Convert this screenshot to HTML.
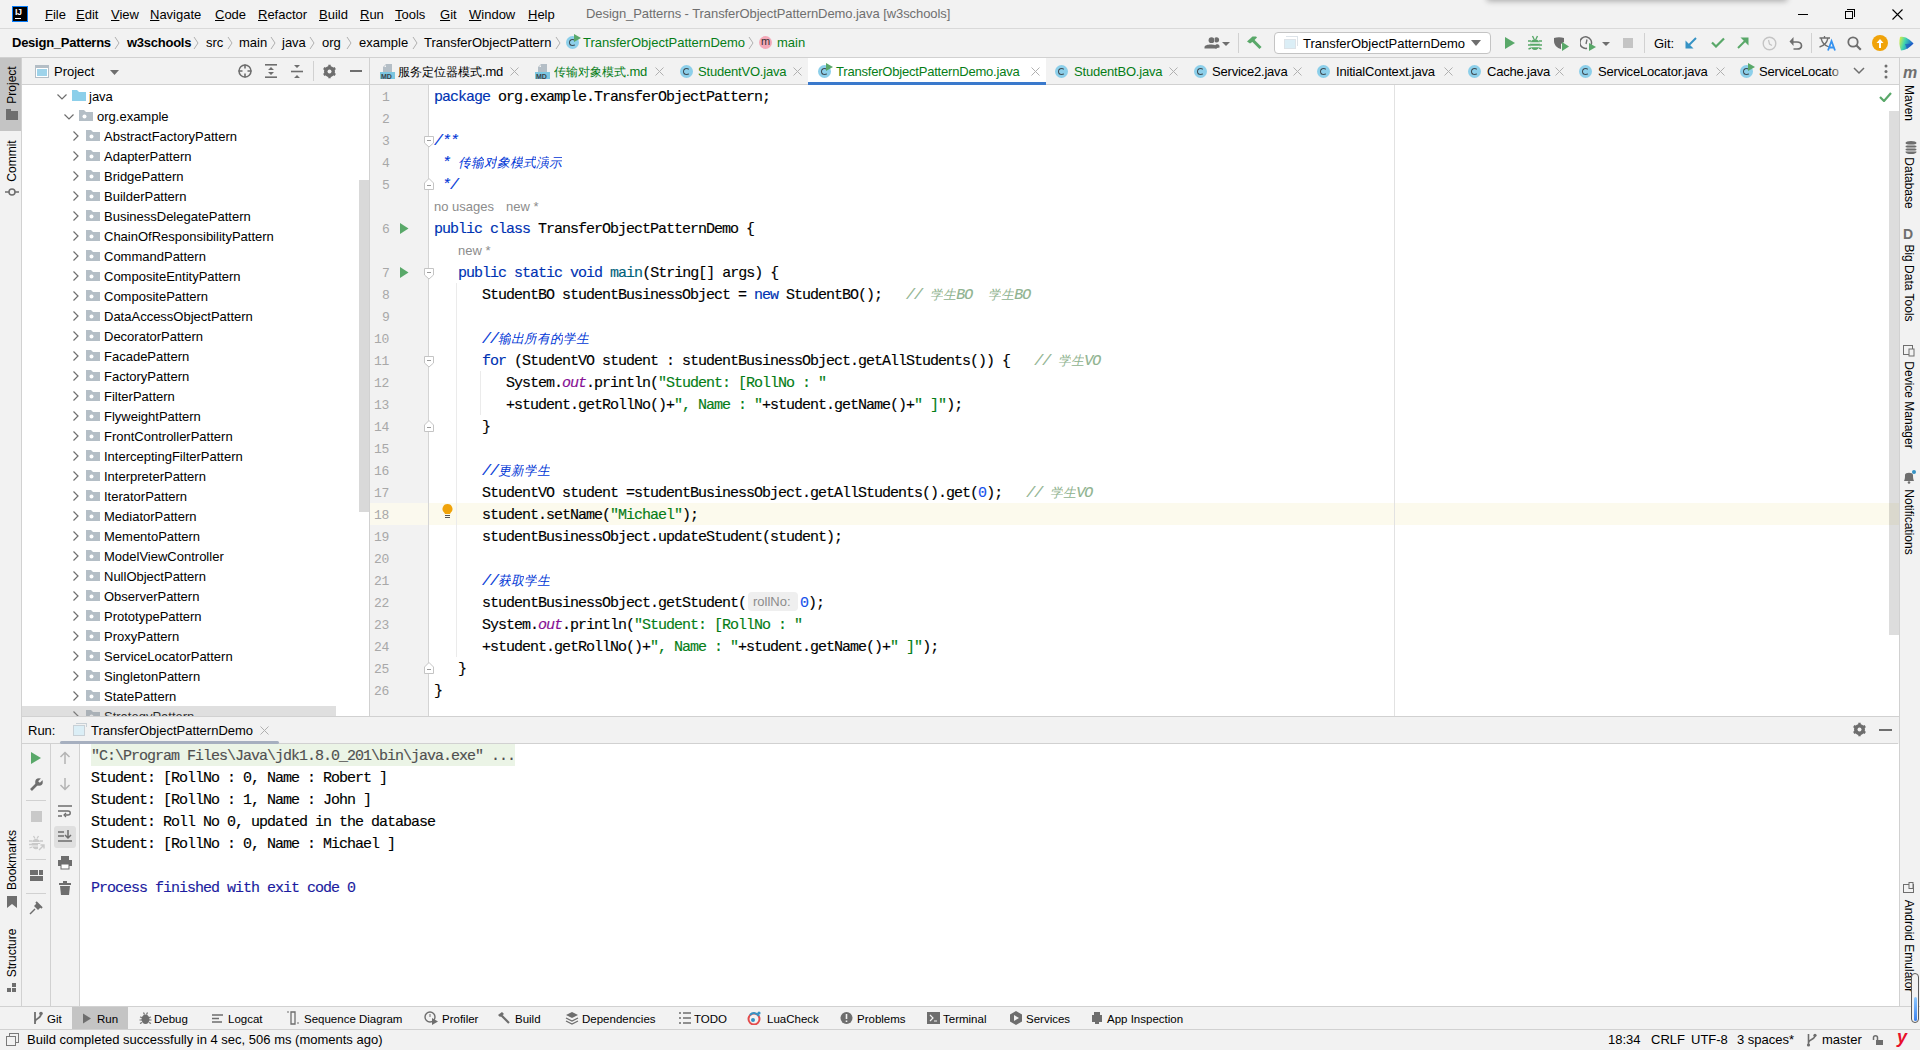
<!DOCTYPE html><html><head><meta charset="utf-8"><style>
*{margin:0;padding:0;box-sizing:border-box}
html,body{width:1920px;height:1050px;overflow:hidden;background:#f2f2f2;font-family:"Liberation Sans",sans-serif;font-size:13px;color:#000}
.a{position:absolute;white-space:pre}
.ui{font-family:"Liberation Sans",sans-serif;font-size:13px;line-height:16px}
.mono{font-family:"Liberation Mono",monospace;font-size:15px;letter-spacing:-1px;line-height:16px;-webkit-text-stroke:0.15px currentColor}
.hl{position:absolute;background:#d1d1d1}
.vl{position:absolute;background:#d1d1d1}
.kw{color:#0033b3}
.str{color:#067d17}
.num{color:#1750eb}
.fn{color:#00627a}
.st{color:#871094;font-style:italic}
.doc{color:#0037d6;font-style:italic}
.tr{color:#8fb38f;font-style:italic}
.inl{color:#8c8c8c}
.cjk{display:inline-block;text-align:center;overflow:hidden;vertical-align:top}
.ui .cjk{font-size:12px;width:12px}
.mono .cjk{font-size:13px;letter-spacing:0;width:13px;-webkit-text-stroke:0}
</style></head><body>
<div class="a" style="left:0px;top:0px;width:1920px;height:28px;background:#f2f2f2;"></div>
<div class="a" style="left:0px;top:28px;width:1920px;height:1px;background:#d9d9d9;"></div>
<div class="a" style="left:1488px;top:-20px;width:298px;height:20px;background:#aaa;box-shadow:0 0 6px 1px rgba(0,0,0,0.32)"></div>
<div class="a" style="left:0px;top:57px;width:1920px;height:1px;background:#d1d1d1;"></div>
<div class="a" style="left:21px;top:58px;width:1px;height:948px;background:#d1d1d1;"></div>
<div class="a" style="left:1899px;top:58px;width:1px;height:948px;background:#d1d1d1;"></div>
<div class="a" style="left:22px;top:85px;width:347px;height:631px;background:#ffffff;"></div>
<div class="a" style="left:22px;top:84px;width:1877px;height:1px;background:#d1d1d1;"></div>
<div class="a" style="left:369px;top:58px;width:1px;height:658px;background:#d1d1d1;"></div>
<div class="a" style="left:370px;top:85px;width:58px;height:631px;background:#f2f2f2;"></div>
<div class="a" style="left:428px;top:85px;width:1px;height:631px;background:#d4d4d4;"></div>
<div class="a" style="left:429px;top:85px;width:1470px;height:631px;background:#ffffff;"></div>
<div class="a" style="left:22px;top:716px;width:1876px;height:1px;background:#d1d1d1;"></div>
<div class="a" style="left:22px;top:743px;width:1876px;height:1px;background:#d1d1d1;"></div>
<div class="a" style="left:50px;top:744px;width:1px;height:262px;background:#d1d1d1;"></div>
<div class="a" style="left:79px;top:744px;width:1px;height:262px;background:#d1d1d1;"></div>
<div class="a" style="left:80px;top:744px;width:1819px;height:262px;background:#ffffff;"></div>
<div class="a" style="left:0px;top:1006px;width:1920px;height:1px;background:#d1d1d1;"></div>
<div class="a" style="left:0px;top:1029px;width:1920px;height:1px;background:#d1d1d1;"></div>
<div class="a" style="left:12px;top:6px;width:16px;height:16px;background:#000000;border:1px solid #087cfa"></div>
<div class="a ui" style="left:15px;top:8px;font-size:9px;font-weight:bold;color:#fff;line-height:9px;letter-spacing:-0.5px">IJ</div>
<div class="a" style="left:15px;top:18px;width:6px;height:1px;background:#ffffff;"></div>
<div class="a ui" style="left:45px;top:7px;"><u>F</u>ile</div>
<div class="a ui" style="left:76px;top:7px;"><u>E</u>dit</div>
<div class="a ui" style="left:111px;top:7px;"><u>V</u>iew</div>
<div class="a ui" style="left:150px;top:7px;"><u>N</u>avigate</div>
<div class="a ui" style="left:215px;top:7px;"><u>C</u>ode</div>
<div class="a ui" style="left:258px;top:7px;"><u>R</u>efactor</div>
<div class="a ui" style="left:319px;top:7px;"><u>B</u>uild</div>
<div class="a ui" style="left:360px;top:7px;"><u>R</u>un</div>
<div class="a ui" style="left:395px;top:7px;"><u>T</u>ools</div>
<div class="a ui" style="left:440px;top:7px;"><u>G</u>it</div>
<div class="a ui" style="left:469px;top:7px;"><u>W</u>indow</div>
<div class="a ui" style="left:528px;top:7px;"><u>H</u>elp</div>
<div class="a ui" style="left:586px;top:6px;color:#6f6f6f;letter-spacing:-0.07px">Design_Patterns - TransferObjectPatternDemo.java [w3schools]</div>
<div class="a" style="left:1798px;top:14px;width:10px;height:1px;background:#000;"></div>
<div class="a" style="left:1845px;top:11px;width:8px;height:8px;border:1px solid #000"></div>
<div class="a" style="left:1847px;top:9px;width:8px;height:8px;border-top:1px solid #000;border-right:1px solid #000"></div>
<svg class="a" style="left:1892px;top:9px" width="11" height="11"><path d="M0.5 0.5L10.5 10.5M10.5 0.5L0.5 10.5" stroke="#000" stroke-width="1.1"/></svg>
<div class="a ui" style="left:12px;top:35px;font-weight:bold;letter-spacing:-0.25px">Design_Patterns</div>
<div class="a ui" style="left:127px;top:35px;font-weight:bold;letter-spacing:-0.25px">w3schools</div>
<div class="a ui" style="left:206px;top:35px;">src</div>
<div class="a ui" style="left:239px;top:35px;">main</div>
<div class="a ui" style="left:282px;top:35px;">java</div>
<div class="a ui" style="left:322px;top:35px;">org</div>
<div class="a ui" style="left:359px;top:35px;">example</div>
<div class="a ui" style="left:424px;top:35px;">TransferObjectPattern</div>
<svg class="a" style="left:114px;top:36px" width="6" height="14"><path d="M1 1L5 7L1 13" fill="none" stroke="#b0b0b0" stroke-width="1"/></svg>
<svg class="a" style="left:193px;top:36px" width="6" height="14"><path d="M1 1L5 7L1 13" fill="none" stroke="#b0b0b0" stroke-width="1"/></svg>
<svg class="a" style="left:227px;top:36px" width="6" height="14"><path d="M1 1L5 7L1 13" fill="none" stroke="#b0b0b0" stroke-width="1"/></svg>
<svg class="a" style="left:270px;top:36px" width="6" height="14"><path d="M1 1L5 7L1 13" fill="none" stroke="#b0b0b0" stroke-width="1"/></svg>
<svg class="a" style="left:309px;top:36px" width="6" height="14"><path d="M1 1L5 7L1 13" fill="none" stroke="#b0b0b0" stroke-width="1"/></svg>
<svg class="a" style="left:346px;top:36px" width="6" height="14"><path d="M1 1L5 7L1 13" fill="none" stroke="#b0b0b0" stroke-width="1"/></svg>
<svg class="a" style="left:412px;top:36px" width="6" height="14"><path d="M1 1L5 7L1 13" fill="none" stroke="#b0b0b0" stroke-width="1"/></svg>
<svg class="a" style="left:555px;top:36px" width="6" height="14"><path d="M1 1L5 7L1 13" fill="none" stroke="#b0b0b0" stroke-width="1"/></svg>
<svg class="a" style="left:748px;top:36px" width="6" height="14"><path d="M1 1L5 7L1 13" fill="none" stroke="#b0b0b0" stroke-width="1"/></svg>
<div class="a" style="left:566px;top:36px;width:13px;height:13px;border-radius:50%;background:#8ccfea"></div>
<div class="a" style="left:569px;top:39px;width:7px;height:7px;border:1.6px solid #3e4a52;border-right-color:transparent;border-radius:50%"></div>
<svg class="a" style="left:574px;top:34px" width="7" height="8"><path d="M0 0L7 4L0 8Z" fill="#59a869"/></svg>
<div class="a ui" style="left:583px;top:35px;color:#067d17">TransferObjectPatternDemo</div>
<div class="a" style="left:759px;top:36px;width:13px;height:13px;border-radius:50%;background:#f4a8b8"></div>
<div class="a ui" style="left:761px;top:33px;font-size:11px;color:#333">m</div>
<div class="a ui" style="left:777px;top:35px;color:#067d17">main</div>
<svg class="a" style="left:1204px;top:36px" width="28" height="14"><circle cx="12.5" cy="3.8" r="2.6" fill="#6e6e6e"/><path d="M11 12.5L11 10C11 8 15 7.5 15.5 10L15.5 11.5Z" fill="#6e6e6e"/><circle cx="7.5" cy="4.2" r="3.4" fill="#f2f2f2"/><circle cx="7.5" cy="4.2" r="2.9" fill="#6e6e6e"/><path d="M0.5 12.5L0.5 11C0.5 7.5 13 7.5 13 11L13 12.5Z" fill="#6e6e6e"/><path d="M18 6L26 6L22 10Z" fill="#6e6e6e"/></svg>
<div class="a" style="left:1238px;top:33px;width:1px;height:20px;background:#d1d1d1;"></div>
<svg class="a" style="left:1246px;top:35px" width="18" height="16"><path d="M1 6.5L6.5 1.5L10 1.5L11 2.5L7 6.5L4 8.5Z" fill="#59a869"/><path d="M6.5 5L14.5 13" stroke="#59a869" stroke-width="3"/></svg>
<div class="a" style="left:1274px;top:32px;width:217px;height:22px;border:1px solid #c4c4c4;border-radius:4px;background:#fff"></div>
<div class="a" style="left:1286px;top:36px;width:12px;height:10px;border-top:1px solid #dde3e8;border-right:1px solid #dde3e8"></div>
<div class="a" style="left:1284px;top:39px;width:12px;height:10px;border:1.5px solid #dde3e8;background:#dbeef6"></div>
<div class="a ui" style="left:1303px;top:36px;">TransferObjectPatternDemo</div>
<svg class="a" style="left:1471px;top:40px" width="10" height="6"><path d="M0 0L10 0L5 6Z" fill="#6e6e6e"/></svg>
<svg class="a" style="left:1505px;top:37px" width="11" height="12"><path d="M0 0L10 6L0 12Z" fill="#59a869"/></svg>
<svg class="a" style="left:1528px;top:35px" width="14" height="16"><path d="M4.5 1L6 4M9.5 1L8 4" stroke="#59a869" stroke-width="1.4"/><path d="M0 6L3 6M11 6L14 6M0 10L3 10M11 10L14 10M0.5 14L3 13M11 13L13.5 14" stroke="#59a869" stroke-width="1.4"/><ellipse cx="7" cy="9.5" rx="4.6" ry="5.6" fill="#59a869"/><path d="M2.5 8L11.5 8M2.5 11.5L11.5 11.5" stroke="#f2f2f2" stroke-width="1.3"/></svg>
<svg class="a" style="left:1554px;top:37px" width="16" height="14"><path d="M0 1C3 0 7 0 10 1L10 5L7 7L7 12C3 11 0 8 0 4Z" fill="#6e6e6e"/><path d="M8 5L15 9.5L8 14Z" fill="#59a869"/></svg>
<svg class="a" style="left:1580px;top:36px" width="32" height="15"><path d="M11 9A5.8 5.8 0 1 0 7 12.3" fill="none" stroke="#6e6e6e" stroke-width="1.5"/><path d="M7 3.5L6 8" stroke="#6e6e6e" stroke-width="1.3"/><path d="M9 7L16 11L9 15Z" fill="#59a869"/><path d="M22 6L30 6L26 10Z" fill="#6e6e6e"/></svg>
<div class="a" style="left:1623px;top:38px;width:10px;height:10px;background:#c4c4c4;"></div>
<div class="a" style="left:1644px;top:33px;width:1px;height:20px;background:#d1d1d1;"></div>
<div class="a ui" style="left:1654px;top:36px;">Git:</div>
<svg class="a" style="left:1685px;top:37px" width="12" height="12"><path d="M11 1L3 9" stroke="#3592c4" stroke-width="2"/><path d="M0.5 3.5L0.5 11.5L8.5 11.5Z" fill="#3592c4"/></svg>
<svg class="a" style="left:1711px;top:37px" width="14" height="11"><path d="M1 5.5L5 9.5L13 1.5" fill="none" stroke="#59a869" stroke-width="2.2"/></svg>
<svg class="a" style="left:1737px;top:37px" width="12" height="12"><path d="M1 11L9 3" stroke="#59a869" stroke-width="2"/><path d="M3.5 0.5L11.5 0.5L11.5 8.5Z" fill="#59a869"/></svg>
<svg class="a" style="left:1762px;top:36px" width="15" height="15"><circle cx="7.5" cy="7.5" r="6.3" fill="none" stroke="#c4c4c4" stroke-width="1.4"/><path d="M6.5 4L7.5 8L10 9.5" fill="none" stroke="#c4c4c4" stroke-width="1.2"/></svg>
<svg class="a" style="left:1789px;top:36px" width="14" height="14"><path d="M3 6L8 6C10.5 6 12.5 7.5 12.5 9.7C12.5 12 10.5 13 8 13L4.5 13" fill="none" stroke="#6e6e6e" stroke-width="1.7"/><path d="M4.5 1L0.5 5.5L4.5 10Z" fill="#6e6e6e"/></svg>
<div class="a" style="left:1811px;top:33px;width:1px;height:20px;background:#d1d1d1;"></div>
<svg class="a" style="left:1819px;top:36px" width="18" height="15"><path d="M0.5 2L11 2M5.5 0L5.5 2M2 2C3 6.5 6.5 10 10 11M9 2C8 6.5 4.5 10 0.5 11" fill="none" stroke="#6e6e6e" stroke-width="1.3"/><path d="M9 14.5L12.5 5L16 14.5M10 11.5L15 11.5" fill="none" stroke="#3592f0" stroke-width="1.8"/></svg>
<svg class="a" style="left:1847px;top:36px" width="15" height="15"><circle cx="6" cy="6" r="4.7" fill="none" stroke="#6e6e6e" stroke-width="1.8"/><path d="M9.3 9.3L13.8 13.8" stroke="#6e6e6e" stroke-width="2.2"/></svg>
<svg class="a" style="left:1872px;top:35px" width="16" height="16"><circle cx="8" cy="8" r="8" fill="#f0a30a"/><path d="M8 13L8 7" stroke="#fff" stroke-width="2"/><path d="M4.5 8L8 4L11.5 8Z" fill="#fff"/></svg>
<svg class="a" style="left:1899px;top:36px" width="15" height="15"><defs><linearGradient id="lg1" x1="0" y1="0" x2="1" y2="0.3"><stop offset="0" stop-color="#e8f040"/><stop offset="0.45" stop-color="#3fd4b0"/><stop offset="1" stop-color="#1d5fcf"/></linearGradient></defs><path d="M1 1C6 0 10 3 14.5 7.5C10 12 6 14.5 2 14.5C0 10 0 5 1 1Z" fill="url(#lg1)"/><path d="M6 8L14.5 7.5L8 13Z" fill="#1d4fc0" opacity="0.6"/></svg>
<div class="a" style="left:35px;top:65px;width:14px;height:13px;border:1px solid #b4bec6;border-top-width:3px;background:#9ed3ea;box-shadow:inset 0 0 0 1px #fff"></div>
<div class="a ui" style="left:54px;top:64px;">Project</div>
<svg class="a" style="left:110px;top:70px" width="9" height="5"><path d="M0 0L9 0L4.5 5Z" fill="#6e6e6e"/></svg>
<svg class="a" style="left:238px;top:64px" width="14" height="14"><circle cx="7" cy="7" r="6" fill="none" stroke="#6e6e6e" stroke-width="1.5"/><path d="M7 0.5L7 4.5M7 9.5L7 13.5M0.5 7L4.5 7M9.5 7L13.5 7" stroke="#6e6e6e" stroke-width="1.6"/></svg>
<svg class="a" style="left:265px;top:64px" width="12" height="14"><rect x="0" y="0" width="12" height="1.6" fill="#6e6e6e"/><rect x="0" y="12.4" width="12" height="1.6" fill="#6e6e6e"/><path d="M3 6L6 3L9 6Z M3 8L6 11L9 8Z" fill="#6e6e6e"/></svg>
<svg class="a" style="left:291px;top:65px" width="12" height="13"><rect x="0" y="5.7" width="12" height="1.6" fill="#6e6e6e"/><path d="M3 0L9 0L6 3Z M3 13L9 13L6 10Z" fill="#6e6e6e"/></svg>
<div class="a" style="left:313px;top:61px;width:1px;height:20px;background:#d1d1d1;"></div>
<svg class="a" style="left:322px;top:64px" width="15" height="15"><circle cx="7.5" cy="7.5" r="3.9" fill="none" stroke="#6e6e6e" stroke-width="3.2"/><path d="M7.5 0.8L7.5 14.2M1.7 4.15L13.3 10.85M1.7 10.85L13.3 4.15" stroke="#6e6e6e" stroke-width="2.4"/><circle cx="7.5" cy="7.5" r="2" fill="#f2f2f2"/></svg>
<div class="a" style="left:350px;top:70px;width:12px;height:2px;background:#6e6e6e;"></div>
<div class="a" style="left:808px;top:58px;width:238px;height:26px;background:#ffffff;"></div>
<div class="a" style="left:808px;top:82px;width:238px;height:3px;background:#3a79cc;"></div>
<svg class="a" style="left:380px;top:64px" width="16" height="16"><path d="M6 0L12 0L12 8L3 8L3 3Z" fill="#b4bec6"/><path d="M4 3L6 1L6 3Z" fill="#f2f2f2"/><rect x="0" y="8" width="15" height="7" fill="#7cc6e0"/><text x="1" y="14.5" font-size="7" font-family="Liberation Sans" font-weight="bold" fill="#3a434a">MD</text></svg>
<div class="a ui" style="left:398px;top:64px;color:#000;letter-spacing:-0.2px"><span class="cjk">服</span><span class="cjk">务</span><span class="cjk">定</span><span class="cjk">位</span><span class="cjk">器</span><span class="cjk">模</span><span class="cjk">式</span>.md</div>
<svg class="a" style="left:510px;top:67px" width="9" height="9"><path d="M0.5 0.5L8.5 8.5M8.5 0.5L0.5 8.5" stroke="#b0b0b0" stroke-width="1"/></svg>
<svg class="a" style="left:535px;top:64px" width="16" height="16"><path d="M6 0L12 0L12 8L3 8L3 3Z" fill="#b4bec6"/><path d="M4 3L6 1L6 3Z" fill="#f2f2f2"/><rect x="0" y="8" width="15" height="7" fill="#7cc6e0"/><text x="1" y="14.5" font-size="7" font-family="Liberation Sans" font-weight="bold" fill="#3a434a">MD</text></svg>
<div class="a ui" style="left:554px;top:64px;color:#067d17;letter-spacing:-0.2px"><span class="cjk">传</span><span class="cjk">输</span><span class="cjk">对</span><span class="cjk">象</span><span class="cjk">模</span><span class="cjk">式</span>.md</div>
<svg class="a" style="left:655px;top:67px" width="9" height="9"><path d="M0.5 0.5L8.5 8.5M8.5 0.5L0.5 8.5" stroke="#b0b0b0" stroke-width="1"/></svg>
<div class="a" style="left:680px;top:65px;width:13px;height:13px;border-radius:50%;background:#8ccfea"></div>
<div class="a" style="left:683px;top:68px;width:7px;height:7px;border:1.6px solid #3e4a52;border-right-color:transparent;border-radius:50%"></div>
<div class="a ui" style="left:698px;top:64px;color:#067d17;letter-spacing:-0.2px">StudentVO.java</div>
<svg class="a" style="left:793px;top:67px" width="9" height="9"><path d="M0.5 0.5L8.5 8.5M8.5 0.5L0.5 8.5" stroke="#b0b0b0" stroke-width="1"/></svg>
<div class="a" style="left:818px;top:65px;width:13px;height:13px;border-radius:50%;background:#8ccfea"></div>
<div class="a" style="left:821px;top:68px;width:7px;height:7px;border:1.6px solid #3e4a52;border-right-color:transparent;border-radius:50%"></div>
<svg class="a" style="left:826px;top:63px" width="7" height="8"><path d="M0 0L7 4L0 8Z" fill="#59a869"/></svg>
<div class="a ui" style="left:836px;top:64px;color:#067d17;letter-spacing:-0.2px">TransferObjectPatternDemo.java</div>
<svg class="a" style="left:1031px;top:67px" width="9" height="9"><path d="M0.5 0.5L8.5 8.5M8.5 0.5L0.5 8.5" stroke="#b0b0b0" stroke-width="1"/></svg>
<div class="a" style="left:1055px;top:65px;width:13px;height:13px;border-radius:50%;background:#8ccfea"></div>
<div class="a" style="left:1058px;top:68px;width:7px;height:7px;border:1.6px solid #3e4a52;border-right-color:transparent;border-radius:50%"></div>
<div class="a ui" style="left:1074px;top:64px;color:#067d17;letter-spacing:-0.2px">StudentBO.java</div>
<svg class="a" style="left:1169px;top:67px" width="9" height="9"><path d="M0.5 0.5L8.5 8.5M8.5 0.5L0.5 8.5" stroke="#b0b0b0" stroke-width="1"/></svg>
<div class="a" style="left:1194px;top:65px;width:13px;height:13px;border-radius:50%;background:#8ccfea"></div>
<div class="a" style="left:1197px;top:68px;width:7px;height:7px;border:1.6px solid #3e4a52;border-right-color:transparent;border-radius:50%"></div>
<div class="a ui" style="left:1212px;top:64px;color:#000;letter-spacing:-0.2px">Service2.java</div>
<svg class="a" style="left:1293px;top:67px" width="9" height="9"><path d="M0.5 0.5L8.5 8.5M8.5 0.5L0.5 8.5" stroke="#b0b0b0" stroke-width="1"/></svg>
<div class="a" style="left:1317px;top:65px;width:13px;height:13px;border-radius:50%;background:#8ccfea"></div>
<div class="a" style="left:1320px;top:68px;width:7px;height:7px;border:1.6px solid #3e4a52;border-right-color:transparent;border-radius:50%"></div>
<div class="a ui" style="left:1336px;top:64px;color:#000;letter-spacing:-0.2px">InitialContext.java</div>
<svg class="a" style="left:1444px;top:67px" width="9" height="9"><path d="M0.5 0.5L8.5 8.5M8.5 0.5L0.5 8.5" stroke="#b0b0b0" stroke-width="1"/></svg>
<div class="a" style="left:1468px;top:65px;width:13px;height:13px;border-radius:50%;background:#8ccfea"></div>
<div class="a" style="left:1471px;top:68px;width:7px;height:7px;border:1.6px solid #3e4a52;border-right-color:transparent;border-radius:50%"></div>
<div class="a ui" style="left:1487px;top:64px;color:#000;letter-spacing:-0.2px">Cache.java</div>
<svg class="a" style="left:1555px;top:67px" width="9" height="9"><path d="M0.5 0.5L8.5 8.5M8.5 0.5L0.5 8.5" stroke="#b0b0b0" stroke-width="1"/></svg>
<div class="a" style="left:1579px;top:65px;width:13px;height:13px;border-radius:50%;background:#8ccfea"></div>
<div class="a" style="left:1582px;top:68px;width:7px;height:7px;border:1.6px solid #3e4a52;border-right-color:transparent;border-radius:50%"></div>
<div class="a ui" style="left:1598px;top:64px;color:#000;letter-spacing:-0.2px">ServiceLocator.java</div>
<svg class="a" style="left:1716px;top:67px" width="9" height="9"><path d="M0.5 0.5L8.5 8.5M8.5 0.5L0.5 8.5" stroke="#b0b0b0" stroke-width="1"/></svg>
<div class="a" style="left:1740px;top:65px;width:13px;height:13px;border-radius:50%;background:#8ccfea"></div>
<div class="a" style="left:1743px;top:68px;width:7px;height:7px;border:1.6px solid #3e4a52;border-right-color:transparent;border-radius:50%"></div>
<svg class="a" style="left:1748px;top:63px" width="7" height="8"><path d="M0 0L7 4L0 8Z" fill="#59a869"/></svg>
<div class="a ui" style="left:1759px;top:64px;color:#000;letter-spacing:-0.2px">ServiceLocato</div>
<div class="a" style="left:1830px;top:60px;width:14px;height:22px;background:linear-gradient(to right,rgba(242,242,242,0),#f2f2f2)"></div>
<svg class="a" style="left:1853px;top:67px" width="12" height="8"><path d="M1 1L6 6L11 1" fill="none" stroke="#6e6e6e" stroke-width="1.5"/></svg>
<svg class="a" style="left:1884px;top:64px" width="4" height="15"><circle cx="2" cy="2" r="1.5" fill="#6e6e6e"/><circle cx="2" cy="7.5" r="1.5" fill="#6e6e6e"/><circle cx="2" cy="13" r="1.5" fill="#6e6e6e"/></svg>
<svg class="a" style="left:57px;top:94px" width="10" height="6"><path d="M0.5 0.5L5 5L9.5 0.5" fill="none" stroke="#6e6e6e" stroke-width="1.2"/></svg>
<svg class="a" style="left:72px;top:90px" width="15" height="12"><path d="M0 0L5 0L7 2L14 2L14 11L0 11Z" fill="#8ccfea"/></svg>
<div class="a ui" style="left:89px;top:89px;">java</div>
<svg class="a" style="left:64px;top:114px" width="10" height="6"><path d="M0.5 0.5L5 5L9.5 0.5" fill="none" stroke="#6e6e6e" stroke-width="1.2"/></svg>
<svg class="a" style="left:79px;top:109px" width="15" height="13"><path d="M0 1L5 1L7 3L14 3L14 12L0 12Z" fill="#b4bec6"/><circle cx="5.5" cy="7.5" r="2" fill="#fff"/></svg>
<div class="a ui" style="left:97px;top:109px;">org.example</div>
<svg class="a" style="left:73px;top:131px" width="6" height="10"><path d="M0.5 0.5L5 5L0.5 9.5" fill="none" stroke="#6e6e6e" stroke-width="1.2"/></svg>
<svg class="a" style="left:86px;top:129px" width="15" height="13"><path d="M0 1L5 1L7 3L14 3L14 12L0 12Z" fill="#b4bec6"/><circle cx="5.5" cy="7.5" r="2" fill="#fff"/></svg>
<div class="a ui" style="left:104px;top:129px;">AbstractFactoryPattern</div>
<svg class="a" style="left:73px;top:151px" width="6" height="10"><path d="M0.5 0.5L5 5L0.5 9.5" fill="none" stroke="#6e6e6e" stroke-width="1.2"/></svg>
<svg class="a" style="left:86px;top:149px" width="15" height="13"><path d="M0 1L5 1L7 3L14 3L14 12L0 12Z" fill="#b4bec6"/><circle cx="5.5" cy="7.5" r="2" fill="#fff"/></svg>
<div class="a ui" style="left:104px;top:149px;">AdapterPattern</div>
<svg class="a" style="left:73px;top:171px" width="6" height="10"><path d="M0.5 0.5L5 5L0.5 9.5" fill="none" stroke="#6e6e6e" stroke-width="1.2"/></svg>
<svg class="a" style="left:86px;top:169px" width="15" height="13"><path d="M0 1L5 1L7 3L14 3L14 12L0 12Z" fill="#b4bec6"/><circle cx="5.5" cy="7.5" r="2" fill="#fff"/></svg>
<div class="a ui" style="left:104px;top:169px;">BridgePattern</div>
<svg class="a" style="left:73px;top:191px" width="6" height="10"><path d="M0.5 0.5L5 5L0.5 9.5" fill="none" stroke="#6e6e6e" stroke-width="1.2"/></svg>
<svg class="a" style="left:86px;top:189px" width="15" height="13"><path d="M0 1L5 1L7 3L14 3L14 12L0 12Z" fill="#b4bec6"/><circle cx="5.5" cy="7.5" r="2" fill="#fff"/></svg>
<div class="a ui" style="left:104px;top:189px;">BuilderPattern</div>
<svg class="a" style="left:73px;top:211px" width="6" height="10"><path d="M0.5 0.5L5 5L0.5 9.5" fill="none" stroke="#6e6e6e" stroke-width="1.2"/></svg>
<svg class="a" style="left:86px;top:209px" width="15" height="13"><path d="M0 1L5 1L7 3L14 3L14 12L0 12Z" fill="#b4bec6"/><circle cx="5.5" cy="7.5" r="2" fill="#fff"/></svg>
<div class="a ui" style="left:104px;top:209px;">BusinessDelegatePattern</div>
<svg class="a" style="left:73px;top:231px" width="6" height="10"><path d="M0.5 0.5L5 5L0.5 9.5" fill="none" stroke="#6e6e6e" stroke-width="1.2"/></svg>
<svg class="a" style="left:86px;top:229px" width="15" height="13"><path d="M0 1L5 1L7 3L14 3L14 12L0 12Z" fill="#b4bec6"/><circle cx="5.5" cy="7.5" r="2" fill="#fff"/></svg>
<div class="a ui" style="left:104px;top:229px;">ChainOfResponsibilityPattern</div>
<svg class="a" style="left:73px;top:251px" width="6" height="10"><path d="M0.5 0.5L5 5L0.5 9.5" fill="none" stroke="#6e6e6e" stroke-width="1.2"/></svg>
<svg class="a" style="left:86px;top:249px" width="15" height="13"><path d="M0 1L5 1L7 3L14 3L14 12L0 12Z" fill="#b4bec6"/><circle cx="5.5" cy="7.5" r="2" fill="#fff"/></svg>
<div class="a ui" style="left:104px;top:249px;">CommandPattern</div>
<svg class="a" style="left:73px;top:271px" width="6" height="10"><path d="M0.5 0.5L5 5L0.5 9.5" fill="none" stroke="#6e6e6e" stroke-width="1.2"/></svg>
<svg class="a" style="left:86px;top:269px" width="15" height="13"><path d="M0 1L5 1L7 3L14 3L14 12L0 12Z" fill="#b4bec6"/><circle cx="5.5" cy="7.5" r="2" fill="#fff"/></svg>
<div class="a ui" style="left:104px;top:269px;">CompositeEntityPattern</div>
<svg class="a" style="left:73px;top:291px" width="6" height="10"><path d="M0.5 0.5L5 5L0.5 9.5" fill="none" stroke="#6e6e6e" stroke-width="1.2"/></svg>
<svg class="a" style="left:86px;top:289px" width="15" height="13"><path d="M0 1L5 1L7 3L14 3L14 12L0 12Z" fill="#b4bec6"/><circle cx="5.5" cy="7.5" r="2" fill="#fff"/></svg>
<div class="a ui" style="left:104px;top:289px;">CompositePattern</div>
<svg class="a" style="left:73px;top:311px" width="6" height="10"><path d="M0.5 0.5L5 5L0.5 9.5" fill="none" stroke="#6e6e6e" stroke-width="1.2"/></svg>
<svg class="a" style="left:86px;top:309px" width="15" height="13"><path d="M0 1L5 1L7 3L14 3L14 12L0 12Z" fill="#b4bec6"/><circle cx="5.5" cy="7.5" r="2" fill="#fff"/></svg>
<div class="a ui" style="left:104px;top:309px;">DataAccessObjectPattern</div>
<svg class="a" style="left:73px;top:331px" width="6" height="10"><path d="M0.5 0.5L5 5L0.5 9.5" fill="none" stroke="#6e6e6e" stroke-width="1.2"/></svg>
<svg class="a" style="left:86px;top:329px" width="15" height="13"><path d="M0 1L5 1L7 3L14 3L14 12L0 12Z" fill="#b4bec6"/><circle cx="5.5" cy="7.5" r="2" fill="#fff"/></svg>
<div class="a ui" style="left:104px;top:329px;">DecoratorPattern</div>
<svg class="a" style="left:73px;top:351px" width="6" height="10"><path d="M0.5 0.5L5 5L0.5 9.5" fill="none" stroke="#6e6e6e" stroke-width="1.2"/></svg>
<svg class="a" style="left:86px;top:349px" width="15" height="13"><path d="M0 1L5 1L7 3L14 3L14 12L0 12Z" fill="#b4bec6"/><circle cx="5.5" cy="7.5" r="2" fill="#fff"/></svg>
<div class="a ui" style="left:104px;top:349px;">FacadePattern</div>
<svg class="a" style="left:73px;top:371px" width="6" height="10"><path d="M0.5 0.5L5 5L0.5 9.5" fill="none" stroke="#6e6e6e" stroke-width="1.2"/></svg>
<svg class="a" style="left:86px;top:369px" width="15" height="13"><path d="M0 1L5 1L7 3L14 3L14 12L0 12Z" fill="#b4bec6"/><circle cx="5.5" cy="7.5" r="2" fill="#fff"/></svg>
<div class="a ui" style="left:104px;top:369px;">FactoryPattern</div>
<svg class="a" style="left:73px;top:391px" width="6" height="10"><path d="M0.5 0.5L5 5L0.5 9.5" fill="none" stroke="#6e6e6e" stroke-width="1.2"/></svg>
<svg class="a" style="left:86px;top:389px" width="15" height="13"><path d="M0 1L5 1L7 3L14 3L14 12L0 12Z" fill="#b4bec6"/><circle cx="5.5" cy="7.5" r="2" fill="#fff"/></svg>
<div class="a ui" style="left:104px;top:389px;">FilterPattern</div>
<svg class="a" style="left:73px;top:411px" width="6" height="10"><path d="M0.5 0.5L5 5L0.5 9.5" fill="none" stroke="#6e6e6e" stroke-width="1.2"/></svg>
<svg class="a" style="left:86px;top:409px" width="15" height="13"><path d="M0 1L5 1L7 3L14 3L14 12L0 12Z" fill="#b4bec6"/><circle cx="5.5" cy="7.5" r="2" fill="#fff"/></svg>
<div class="a ui" style="left:104px;top:409px;">FlyweightPattern</div>
<svg class="a" style="left:73px;top:431px" width="6" height="10"><path d="M0.5 0.5L5 5L0.5 9.5" fill="none" stroke="#6e6e6e" stroke-width="1.2"/></svg>
<svg class="a" style="left:86px;top:429px" width="15" height="13"><path d="M0 1L5 1L7 3L14 3L14 12L0 12Z" fill="#b4bec6"/><circle cx="5.5" cy="7.5" r="2" fill="#fff"/></svg>
<div class="a ui" style="left:104px;top:429px;">FrontControllerPattern</div>
<svg class="a" style="left:73px;top:451px" width="6" height="10"><path d="M0.5 0.5L5 5L0.5 9.5" fill="none" stroke="#6e6e6e" stroke-width="1.2"/></svg>
<svg class="a" style="left:86px;top:449px" width="15" height="13"><path d="M0 1L5 1L7 3L14 3L14 12L0 12Z" fill="#b4bec6"/><circle cx="5.5" cy="7.5" r="2" fill="#fff"/></svg>
<div class="a ui" style="left:104px;top:449px;">InterceptingFilterPattern</div>
<svg class="a" style="left:73px;top:471px" width="6" height="10"><path d="M0.5 0.5L5 5L0.5 9.5" fill="none" stroke="#6e6e6e" stroke-width="1.2"/></svg>
<svg class="a" style="left:86px;top:469px" width="15" height="13"><path d="M0 1L5 1L7 3L14 3L14 12L0 12Z" fill="#b4bec6"/><circle cx="5.5" cy="7.5" r="2" fill="#fff"/></svg>
<div class="a ui" style="left:104px;top:469px;">InterpreterPattern</div>
<svg class="a" style="left:73px;top:491px" width="6" height="10"><path d="M0.5 0.5L5 5L0.5 9.5" fill="none" stroke="#6e6e6e" stroke-width="1.2"/></svg>
<svg class="a" style="left:86px;top:489px" width="15" height="13"><path d="M0 1L5 1L7 3L14 3L14 12L0 12Z" fill="#b4bec6"/><circle cx="5.5" cy="7.5" r="2" fill="#fff"/></svg>
<div class="a ui" style="left:104px;top:489px;">IteratorPattern</div>
<svg class="a" style="left:73px;top:511px" width="6" height="10"><path d="M0.5 0.5L5 5L0.5 9.5" fill="none" stroke="#6e6e6e" stroke-width="1.2"/></svg>
<svg class="a" style="left:86px;top:509px" width="15" height="13"><path d="M0 1L5 1L7 3L14 3L14 12L0 12Z" fill="#b4bec6"/><circle cx="5.5" cy="7.5" r="2" fill="#fff"/></svg>
<div class="a ui" style="left:104px;top:509px;">MediatorPattern</div>
<svg class="a" style="left:73px;top:531px" width="6" height="10"><path d="M0.5 0.5L5 5L0.5 9.5" fill="none" stroke="#6e6e6e" stroke-width="1.2"/></svg>
<svg class="a" style="left:86px;top:529px" width="15" height="13"><path d="M0 1L5 1L7 3L14 3L14 12L0 12Z" fill="#b4bec6"/><circle cx="5.5" cy="7.5" r="2" fill="#fff"/></svg>
<div class="a ui" style="left:104px;top:529px;">MementoPattern</div>
<svg class="a" style="left:73px;top:551px" width="6" height="10"><path d="M0.5 0.5L5 5L0.5 9.5" fill="none" stroke="#6e6e6e" stroke-width="1.2"/></svg>
<svg class="a" style="left:86px;top:549px" width="15" height="13"><path d="M0 1L5 1L7 3L14 3L14 12L0 12Z" fill="#b4bec6"/><circle cx="5.5" cy="7.5" r="2" fill="#fff"/></svg>
<div class="a ui" style="left:104px;top:549px;">ModelViewController</div>
<svg class="a" style="left:73px;top:571px" width="6" height="10"><path d="M0.5 0.5L5 5L0.5 9.5" fill="none" stroke="#6e6e6e" stroke-width="1.2"/></svg>
<svg class="a" style="left:86px;top:569px" width="15" height="13"><path d="M0 1L5 1L7 3L14 3L14 12L0 12Z" fill="#b4bec6"/><circle cx="5.5" cy="7.5" r="2" fill="#fff"/></svg>
<div class="a ui" style="left:104px;top:569px;">NullObjectPattern</div>
<svg class="a" style="left:73px;top:591px" width="6" height="10"><path d="M0.5 0.5L5 5L0.5 9.5" fill="none" stroke="#6e6e6e" stroke-width="1.2"/></svg>
<svg class="a" style="left:86px;top:589px" width="15" height="13"><path d="M0 1L5 1L7 3L14 3L14 12L0 12Z" fill="#b4bec6"/><circle cx="5.5" cy="7.5" r="2" fill="#fff"/></svg>
<div class="a ui" style="left:104px;top:589px;">ObserverPattern</div>
<svg class="a" style="left:73px;top:611px" width="6" height="10"><path d="M0.5 0.5L5 5L0.5 9.5" fill="none" stroke="#6e6e6e" stroke-width="1.2"/></svg>
<svg class="a" style="left:86px;top:609px" width="15" height="13"><path d="M0 1L5 1L7 3L14 3L14 12L0 12Z" fill="#b4bec6"/><circle cx="5.5" cy="7.5" r="2" fill="#fff"/></svg>
<div class="a ui" style="left:104px;top:609px;">PrototypePattern</div>
<svg class="a" style="left:73px;top:631px" width="6" height="10"><path d="M0.5 0.5L5 5L0.5 9.5" fill="none" stroke="#6e6e6e" stroke-width="1.2"/></svg>
<svg class="a" style="left:86px;top:629px" width="15" height="13"><path d="M0 1L5 1L7 3L14 3L14 12L0 12Z" fill="#b4bec6"/><circle cx="5.5" cy="7.5" r="2" fill="#fff"/></svg>
<div class="a ui" style="left:104px;top:629px;">ProxyPattern</div>
<svg class="a" style="left:73px;top:651px" width="6" height="10"><path d="M0.5 0.5L5 5L0.5 9.5" fill="none" stroke="#6e6e6e" stroke-width="1.2"/></svg>
<svg class="a" style="left:86px;top:649px" width="15" height="13"><path d="M0 1L5 1L7 3L14 3L14 12L0 12Z" fill="#b4bec6"/><circle cx="5.5" cy="7.5" r="2" fill="#fff"/></svg>
<div class="a ui" style="left:104px;top:649px;">ServiceLocatorPattern</div>
<svg class="a" style="left:73px;top:671px" width="6" height="10"><path d="M0.5 0.5L5 5L0.5 9.5" fill="none" stroke="#6e6e6e" stroke-width="1.2"/></svg>
<svg class="a" style="left:86px;top:669px" width="15" height="13"><path d="M0 1L5 1L7 3L14 3L14 12L0 12Z" fill="#b4bec6"/><circle cx="5.5" cy="7.5" r="2" fill="#fff"/></svg>
<div class="a ui" style="left:104px;top:669px;">SingletonPattern</div>
<svg class="a" style="left:73px;top:691px" width="6" height="10"><path d="M0.5 0.5L5 5L0.5 9.5" fill="none" stroke="#6e6e6e" stroke-width="1.2"/></svg>
<svg class="a" style="left:86px;top:689px" width="15" height="13"><path d="M0 1L5 1L7 3L14 3L14 12L0 12Z" fill="#b4bec6"/><circle cx="5.5" cy="7.5" r="2" fill="#fff"/></svg>
<div class="a ui" style="left:104px;top:689px;">StatePattern</div>
<svg class="a" style="left:73px;top:711px" width="6" height="10"><path d="M0.5 0.5L5 5L0.5 9.5" fill="none" stroke="#6e6e6e" stroke-width="1.2"/></svg>
<svg class="a" style="left:86px;top:709px" width="15" height="13"><path d="M0 1L5 1L7 3L14 3L14 12L0 12Z" fill="#b4bec6"/><circle cx="5.5" cy="7.5" r="2" fill="#fff"/></svg>
<div class="a ui" style="left:104px;top:709px;">StrategyPattern</div>
<div class="a" style="left:22px;top:706px;width:314px;height:10px;background:rgba(150,150,150,0.3);"></div>
<div class="a" style="left:359px;top:180px;width:10px;height:332px;background:#d9d9d9;border-radius:0"></div>
<div class="a" style="left:0px;top:58px;width:21px;height:73px;background:#c4c4c4;"></div>
<div class="a" style="left:370px;top:503px;width:58px;height:22px;background:#fbf9ee;"></div>
<div class="a" style="left:429px;top:503px;width:1470px;height:22px;background:#fcfaed;"></div>
<div class="a mono" style="left:382px;top:90px;color:#a8a8a8;font-size:13px;letter-spacing:-0.3px;-webkit-text-stroke:0">1</div>
<div class="a mono" style="left:382px;top:112px;color:#a8a8a8;font-size:13px;letter-spacing:-0.3px;-webkit-text-stroke:0">2</div>
<div class="a mono" style="left:382px;top:134px;color:#a8a8a8;font-size:13px;letter-spacing:-0.3px;-webkit-text-stroke:0">3</div>
<div class="a mono" style="left:382px;top:156px;color:#a8a8a8;font-size:13px;letter-spacing:-0.3px;-webkit-text-stroke:0">4</div>
<div class="a mono" style="left:382px;top:178px;color:#a8a8a8;font-size:13px;letter-spacing:-0.3px;-webkit-text-stroke:0">5</div>
<div class="a mono" style="left:382px;top:222px;color:#a8a8a8;font-size:13px;letter-spacing:-0.3px;-webkit-text-stroke:0">6</div>
<div class="a mono" style="left:382px;top:266px;color:#a8a8a8;font-size:13px;letter-spacing:-0.3px;-webkit-text-stroke:0">7</div>
<div class="a mono" style="left:382px;top:288px;color:#a8a8a8;font-size:13px;letter-spacing:-0.3px;-webkit-text-stroke:0">8</div>
<div class="a mono" style="left:382px;top:310px;color:#a8a8a8;font-size:13px;letter-spacing:-0.3px;-webkit-text-stroke:0">9</div>
<div class="a mono" style="left:374px;top:332px;color:#a8a8a8;font-size:13px;letter-spacing:-0.3px;-webkit-text-stroke:0">10</div>
<div class="a mono" style="left:374px;top:354px;color:#a8a8a8;font-size:13px;letter-spacing:-0.3px;-webkit-text-stroke:0">11</div>
<div class="a mono" style="left:374px;top:376px;color:#a8a8a8;font-size:13px;letter-spacing:-0.3px;-webkit-text-stroke:0">12</div>
<div class="a mono" style="left:374px;top:398px;color:#a8a8a8;font-size:13px;letter-spacing:-0.3px;-webkit-text-stroke:0">13</div>
<div class="a mono" style="left:374px;top:420px;color:#a8a8a8;font-size:13px;letter-spacing:-0.3px;-webkit-text-stroke:0">14</div>
<div class="a mono" style="left:374px;top:442px;color:#a8a8a8;font-size:13px;letter-spacing:-0.3px;-webkit-text-stroke:0">15</div>
<div class="a mono" style="left:374px;top:464px;color:#a8a8a8;font-size:13px;letter-spacing:-0.3px;-webkit-text-stroke:0">16</div>
<div class="a mono" style="left:374px;top:486px;color:#a8a8a8;font-size:13px;letter-spacing:-0.3px;-webkit-text-stroke:0">17</div>
<div class="a mono" style="left:374px;top:508px;color:#a8a8a8;font-size:13px;letter-spacing:-0.3px;-webkit-text-stroke:0">18</div>
<div class="a mono" style="left:374px;top:530px;color:#a8a8a8;font-size:13px;letter-spacing:-0.3px;-webkit-text-stroke:0">19</div>
<div class="a mono" style="left:374px;top:552px;color:#a8a8a8;font-size:13px;letter-spacing:-0.3px;-webkit-text-stroke:0">20</div>
<div class="a mono" style="left:374px;top:574px;color:#a8a8a8;font-size:13px;letter-spacing:-0.3px;-webkit-text-stroke:0">21</div>
<div class="a mono" style="left:374px;top:596px;color:#a8a8a8;font-size:13px;letter-spacing:-0.3px;-webkit-text-stroke:0">22</div>
<div class="a mono" style="left:374px;top:618px;color:#a8a8a8;font-size:13px;letter-spacing:-0.3px;-webkit-text-stroke:0">23</div>
<div class="a mono" style="left:374px;top:640px;color:#a8a8a8;font-size:13px;letter-spacing:-0.3px;-webkit-text-stroke:0">24</div>
<div class="a mono" style="left:374px;top:662px;color:#a8a8a8;font-size:13px;letter-spacing:-0.3px;-webkit-text-stroke:0">25</div>
<div class="a mono" style="left:374px;top:684px;color:#a8a8a8;font-size:13px;letter-spacing:-0.3px;-webkit-text-stroke:0">26</div>
<div class="a" style="left:1394px;top:85px;width:1px;height:631px;background:#e2e2e2;"></div>
<div class="a" style="left:456px;top:283px;width:1px;height:374px;background:#ebebeb;"></div>
<div class="a" style="left:480px;top:371px;width:1px;height:44px;background:#ebebeb;"></div>
<div class="a" style="left:456px;top:503px;width:1px;height:0px;background:#ebebeb;"></div>
<div class="a mono" style="left:434px;top:90px;"><span class="kw">package</span> org.example.TransferObjectPattern;</div>
<div class="a mono" style="left:434px;top:134px;"><span class="doc">/**</span></div>
<div class="a mono" style="left:434px;top:156px;"><span class="doc"> * <span class="cjk">传</span><span class="cjk">输</span><span class="cjk">对</span><span class="cjk">象</span><span class="cjk">模</span><span class="cjk">式</span><span class="cjk">演</span><span class="cjk">示</span></span></div>
<div class="a mono" style="left:434px;top:178px;"><span class="doc"> */</span></div>
<div class="a ui" style="left:434px;top:199px;font-size:13px;color:#8c8c8c">no usages</div>
<div class="a ui" style="left:506px;top:199px;font-size:13px;color:#8c8c8c">new *</div>
<div class="a mono" style="left:434px;top:222px;"><span class="kw">public</span> <span class="kw">class</span> TransferObjectPatternDemo {</div>
<div class="a ui" style="left:458px;top:243px;font-size:13px;color:#8c8c8c">new *</div>
<div class="a mono" style="left:434px;top:266px;">   <span class="kw">public</span> <span class="kw">static</span> <span class="kw">void</span> <span class="fn">main</span>(String[] args) {</div>
<div class="a mono" style="left:434px;top:288px;">      StudentBO studentBusinessObject = <span class="kw">new</span> StudentBO();   <span class="tr">// <span class="cjk">学</span><span class="cjk">生</span>BO  <span class="cjk">学</span><span class="cjk">生</span>BO</span></div>
<div class="a mono" style="left:434px;top:332px;">      <span class="doc">//<span class="cjk">输</span><span class="cjk">出</span><span class="cjk">所</span><span class="cjk">有</span><span class="cjk">的</span><span class="cjk">学</span><span class="cjk">生</span></span></div>
<div class="a mono" style="left:434px;top:354px;">      <span class="kw">for</span> (StudentVO student : studentBusinessObject.getAllStudents()) {   <span class="tr">// <span class="cjk">学</span><span class="cjk">生</span>VO</span></div>
<div class="a mono" style="left:434px;top:376px;">         System.<span class="st">out</span>.println(<span class="str">"Student: [RollNo : "</span></div>
<div class="a mono" style="left:434px;top:398px;">         +student.getRollNo()+<span class="str">", Name : "</span>+student.getName()+<span class="str">" ]"</span>);</div>
<div class="a mono" style="left:434px;top:420px;">      }</div>
<div class="a mono" style="left:434px;top:464px;">      <span class="doc">//<span class="cjk">更</span><span class="cjk">新</span><span class="cjk">学</span><span class="cjk">生</span></span></div>
<div class="a mono" style="left:434px;top:486px;">      StudentVO student =studentBusinessObject.getAllStudents().get(<span class="num">0</span>);   <span class="tr">// <span class="cjk">学</span><span class="cjk">生</span>VO</span></div>
<div class="a mono" style="left:434px;top:508px;">      student.setName(<span class="str">"Michael"</span>);</div>
<div class="a mono" style="left:434px;top:530px;">      studentBusinessObject.updateStudent(student);</div>
<div class="a mono" style="left:434px;top:574px;">      <span class="doc">//<span class="cjk">获</span><span class="cjk">取</span><span class="cjk">学</span><span class="cjk">生</span></span></div>
<div class="a mono" style="left:434px;top:596px;">      studentBusinessObject.getStudent(</div>
<div class="a" style="left:748px;top:592px;width:50px;height:19px;border-radius:4px;background:#efefef"></div>
<div class="a ui" style="left:753px;top:594px;font-size:13px;color:#8c8c8c;letter-spacing:0">rollNo:</div>
<div class="a mono" style="left:800px;top:596px;"><span class="num">0</span>);</div>
<div class="a mono" style="left:434px;top:618px;">      System.<span class="st">out</span>.println(<span class="str">"Student: [RollNo : "</span></div>
<div class="a mono" style="left:434px;top:640px;">      +student.getRollNo()+<span class="str">", Name : "</span>+student.getName()+<span class="str">" ]"</span>);</div>
<div class="a mono" style="left:434px;top:662px;">   }</div>
<div class="a mono" style="left:434px;top:684px;">}</div>
<svg class="a" style="left:400px;top:223px" width="9" height="11"><path d="M0 0L8.5 5.5L0 11Z" fill="#59a869"/></svg>
<svg class="a" style="left:400px;top:267px" width="9" height="11"><path d="M0 0L8.5 5.5L0 11Z" fill="#59a869"/></svg>
<svg class="a" style="left:424px;top:136px" width="11" height="12"><path d="M0.5 0.5L9.5 0.5L9.5 7L5 11L0.5 7Z" fill="#fff" stroke="#c4c4c4"/><path d="M3 4.5L7 4.5" stroke="#9a9a9a"/></svg>
<svg class="a" style="left:424px;top:178px" width="11" height="12"><path d="M0.5 11.5L9.5 11.5L9.5 5L5 0.5L0.5 5Z" fill="#fff" stroke="#c4c4c4"/><path d="M3 7.5L7 7.5" stroke="#9a9a9a"/></svg>
<svg class="a" style="left:424px;top:268px" width="11" height="12"><path d="M0.5 0.5L9.5 0.5L9.5 7L5 11L0.5 7Z" fill="#fff" stroke="#c4c4c4"/><path d="M3 4.5L7 4.5" stroke="#9a9a9a"/></svg>
<svg class="a" style="left:424px;top:356px" width="11" height="12"><path d="M0.5 0.5L9.5 0.5L9.5 7L5 11L0.5 7Z" fill="#fff" stroke="#c4c4c4"/><path d="M3 4.5L7 4.5" stroke="#9a9a9a"/></svg>
<svg class="a" style="left:424px;top:420px" width="11" height="12"><path d="M0.5 11.5L9.5 11.5L9.5 5L5 0.5L0.5 5Z" fill="#fff" stroke="#c4c4c4"/><path d="M3 7.5L7 7.5" stroke="#9a9a9a"/></svg>
<svg class="a" style="left:424px;top:662px" width="11" height="12"><path d="M0.5 11.5L9.5 11.5L9.5 5L5 0.5L0.5 5Z" fill="#fff" stroke="#c4c4c4"/><path d="M3 7.5L7 7.5" stroke="#9a9a9a"/></svg>
<svg class="a" style="left:442px;top:504px" width="11" height="15"><path d="M5.5 0A5 5 0 0 1 8.5 9L8 10L3 10L2.5 9A5 5 0 0 1 5.5 0Z" fill="#f0a30a"/><path d="M3 11.5L8 11.5M3 13.5L8 13.5" stroke="#555" stroke-width="1.1"/></svg>
<svg class="a" style="left:1879px;top:92px" width="13" height="10"><path d="M1 5L5 9L12 1" fill="none" stroke="#59a869" stroke-width="2.2"/></svg>
<div class="a" style="left:1889px;top:111px;width:10px;height:524px;background:rgba(0,0,0,0.135);"></div>
<div class="a" style="left:22px;top:716px;width:1877px;height:1px;background:#d1d1d1;"></div>
<div class="a" style="left:22px;top:717px;width:1877px;height:26px;background:#f2f2f2;"></div>
<div class="a ui" style="left:28px;top:723px;">Run:</div>
<div class="a" style="left:73px;top:725px;width:12px;height:11px;border:1px solid #c8d0d6;background:#dbeef6"></div>
<div class="a" style="left:76px;top:723px;width:11px;height:4px;border-top:1px solid #c8d0d6;border-right:1px solid #c8d0d6"></div>
<div class="a ui" style="left:91px;top:723px;">TransferObjectPatternDemo</div>
<svg class="a" style="left:260px;top:726px" width="9" height="9"><path d="M0.5 0.5L8.5 8.5M8.5 0.5L0.5 8.5" stroke="#b0b0b0" stroke-width="1"/></svg>
<div class="a" style="left:60px;top:741px;width:219px;height:3px;background:#a6afbf;border-radius:2px"></div>
<svg class="a" style="left:1852px;top:722px" width="15" height="15"><circle cx="7.5" cy="7.5" r="3.9" fill="none" stroke="#6e6e6e" stroke-width="3.2"/><path d="M7.5 0.8L7.5 14.2M1.7 4.15L13.3 10.85M1.7 10.85L13.3 4.15" stroke="#6e6e6e" stroke-width="2.4"/><circle cx="7.5" cy="7.5" r="2" fill="#f2f2f2"/></svg>
<div class="a" style="left:1879px;top:729px;width:13px;height:2px;background:#6e6e6e;"></div>
<div class="a" style="left:91px;top:744px;width:424px;height:22px;background:#ebf4e6;"></div>
<div class="a mono" style="left:91px;top:749px;"><span style="color:#505050">"C:\Program Files\Java\jdk1.8.0_201\bin\java.exe" ...</span></div>
<div class="a mono" style="left:91px;top:771px;">Student: [RollNo : 0, Name : Robert ]</div>
<div class="a mono" style="left:91px;top:793px;">Student: [RollNo : 1, Name : John ]</div>
<div class="a mono" style="left:91px;top:815px;">Student: Roll No 0, updated in the database</div>
<div class="a mono" style="left:91px;top:837px;">Student: [RollNo : 0, Name : Michael ]</div>
<div class="a mono" style="left:91px;top:881px;"><span style="color:#1c1ca0">Process finished with exit code 0</span></div>
<svg class="a" style="left:31px;top:752px" width="11" height="12"><path d="M0 0L10 6L0 12Z" fill="#59a869"/></svg>
<svg class="a" style="left:29px;top:777px" width="15" height="15"><path d="M2 13L8 7" stroke="#6e6e6e" stroke-width="2.6"/><circle cx="10" cy="5" r="3.8" fill="#6e6e6e"/><path d="M10 5L14 1" stroke="#f2f2f2" stroke-width="2.4"/></svg>
<div class="a" style="left:26px;top:800px;width:20px;height:1px;background:#d1d1d1;"></div>
<div class="a" style="left:31px;top:811px;width:11px;height:11px;background:#c9c9c9;"></div>
<svg class="a" style="left:29px;top:835px" width="16" height="16"><path d="M4.5 1L6 3.5M9.5 1L8 3.5M0 6L3 6M11 6L14 6M0 9.5L3 9.5M0.5 13L3 12" stroke="#c9c9c9" stroke-width="1.3"/><ellipse cx="7" cy="9" rx="4.3" ry="5.2" fill="#c9c9c9"/><path d="M3 7.5L11 7.5M3 11L11 11" stroke="#f2f2f2" stroke-width="1.1"/><path d="M9 9L15.5 9L15.5 15.5L9 15.5Z" fill="#f2f2f2"/><path d="M10 15L15 10M11.5 10L15 10L15 13.5" fill="none" stroke="#c9c9c9" stroke-width="1.4"/></svg>
<div class="a" style="left:26px;top:859px;width:20px;height:1px;background:#d1d1d1;"></div>
<svg class="a" style="left:30px;top:870px" width="13" height="11"><rect x="0" y="0" width="8" height="5" fill="#6e6e6e"/><rect x="9" y="0" width="4" height="5" fill="#6e6e6e"/><rect x="0" y="6" width="13" height="5" fill="#6e6e6e"/></svg>
<div class="a" style="left:26px;top:893px;width:20px;height:1px;background:#d1d1d1;"></div>
<svg class="a" style="left:29px;top:900px" width="14" height="15"><path d="M1 14L6 9" stroke="#6e6e6e" stroke-width="1.5"/><path d="M5 6L9 10L12 7L8 3Z" fill="#6e6e6e"/><path d="M7 2L13 8" stroke="#6e6e6e" stroke-width="2"/></svg>
<svg class="a" style="left:59px;top:751px" width="12" height="14"><path d="M6 13L6 2M1.5 6L6 1.5L10.5 6" fill="none" stroke="#b4b4b4" stroke-width="1.5"/></svg>
<svg class="a" style="left:59px;top:777px" width="12" height="14"><path d="M6 1L6 12M1.5 8L6 12.5L10.5 8" fill="none" stroke="#b4b4b4" stroke-width="1.5"/></svg>
<svg class="a" style="left:58px;top:804px" width="14" height="14"><path d="M0 2L14 2M0 7L10 7C13 7 13 11 10 11L7 11M0 12L4 12" fill="none" stroke="#6e6e6e" stroke-width="1.4"/><path d="M8 9L6 11L8 13" fill="none" stroke="#6e6e6e" stroke-width="1.2"/></svg>
<div class="a" style="left:54px;top:826px;width:22px;height:22px;background:#dfdfdf;border-radius:3px"></div>
<svg class="a" style="left:58px;top:829px" width="14" height="15"><path d="M0 3L6 3M0 7L6 7M0 12L14 12M10 1L10 9M7 6L10 9L13 6" fill="none" stroke="#6e6e6e" stroke-width="1.5"/></svg>
<svg class="a" style="left:58px;top:856px" width="14" height="14"><rect x="3" y="0" width="8" height="4" fill="#6e6e6e"/><rect x="0" y="4" width="14" height="6" fill="#6e6e6e"/><rect x="3" y="8" width="8" height="5" fill="#fff" stroke="#6e6e6e"/></svg>
<svg class="a" style="left:59px;top:881px" width="12" height="15"><rect x="0" y="2" width="12" height="2" fill="#6e6e6e"/><rect x="4" y="0" width="4" height="2" fill="#6e6e6e"/><path d="M1 5L11 5L10 14L2 14Z" fill="#6e6e6e"/></svg>
<div class="a" style="left:72px;top:1007px;width:56px;height:22px;background:#c4c4c4;"></div>
<div class="a ui" style="left:47px;top:1011px;font-size:11.5px">Git</div>
<div class="a ui" style="left:97px;top:1011px;font-size:11.5px">Run</div>
<div class="a ui" style="left:154px;top:1011px;font-size:11.5px">Debug</div>
<div class="a ui" style="left:228px;top:1011px;font-size:11.5px">Logcat</div>
<div class="a ui" style="left:304px;top:1011px;font-size:11.5px">Sequence Diagram</div>
<div class="a ui" style="left:442px;top:1011px;font-size:11.5px">Profiler</div>
<div class="a ui" style="left:515px;top:1011px;font-size:11.5px">Build</div>
<div class="a ui" style="left:582px;top:1011px;font-size:11.5px">Dependencies</div>
<div class="a ui" style="left:694px;top:1011px;font-size:11.5px">TODO</div>
<div class="a ui" style="left:767px;top:1011px;font-size:11.5px">LuaCheck</div>
<div class="a ui" style="left:857px;top:1011px;font-size:11.5px">Problems</div>
<div class="a ui" style="left:943px;top:1011px;font-size:11.5px">Terminal</div>
<div class="a ui" style="left:1026px;top:1011px;font-size:11.5px">Services</div>
<div class="a ui" style="left:1107px;top:1011px;font-size:11.5px">App Inspection</div>
<svg class="a" style="left:32px;top:1011px" width="12" height="14"><path d="M3 1L3 13M3 11C3 7 9 8 9 3" fill="none" stroke="#6e6e6e" stroke-width="1.8"/><circle cx="9" cy="2.5" r="1.8" fill="#6e6e6e"/></svg>
<svg class="a" style="left:83px;top:1011px" width="10" height="14"><path d="M0 2.5L8 7.5L0 12.5Z" fill="#6e6e6e"/></svg>
<svg class="a" style="left:139px;top:1011px" width="13" height="14"><path d="M4.5 1.5L5.5 3.5M8.5 1.5L7.5 3.5M1 6L3 6.5M10 6.5L12 6M0.5 9L3 9M10 9L12.5 9M1 12.5L3 11.5M10 11.5L12 12.5" stroke="#6e6e6e" stroke-width="1.2"/><ellipse cx="6.5" cy="8.3" rx="4" ry="4.8" fill="#6e6e6e"/></svg>
<svg class="a" style="left:212px;top:1011px" width="13" height="14"><path d="M0 4L11 4M0 7.5L7 7.5M0 11L10 11" stroke="#6e6e6e" stroke-width="1.6"/></svg>
<svg class="a" style="left:286px;top:1011px" width="14" height="14"><path d="M5 1L9 1L9 13L5 13Z" fill="none" stroke="#6e6e6e" stroke-width="1.3"/><path d="M1 1L3 1M11 12L13 12" stroke="#6e6e6e"/></svg>
<svg class="a" style="left:424px;top:1011px" width="14" height="14"><circle cx="6" cy="6" r="5" fill="none" stroke="#6e6e6e" stroke-width="1.4"/><path d="M6 3L6 6" stroke="#6e6e6e"/><path d="M8 7L14 10.5L8 14Z" fill="#6e6e6e"/></svg>
<svg class="a" style="left:497px;top:1011px" width="14" height="14"><path d="M1 4L5 1L7 3L3 6Z" fill="#6e6e6e"/><path d="M4 4L12 12" stroke="#6e6e6e" stroke-width="2.2"/></svg>
<svg class="a" style="left:565px;top:1011px" width="14" height="14"><path d="M7 1L13 4L7 7L1 4Z" fill="#6e6e6e"/><path d="M1 7L7 10L13 7M1 10L7 13L13 10" fill="none" stroke="#6e6e6e" stroke-width="1.3"/></svg>
<svg class="a" style="left:679px;top:1011px" width="12" height="14"><path d="M0 2L2 2M4 2L12 2M0 7L2 7M4 7L12 7M0 12L2 12M4 12L12 12" stroke="#6e6e6e" stroke-width="1.6"/></svg>
<svg class="a" style="left:747px;top:1011px" width="14" height="14"><circle cx="7" cy="8" r="5.5" fill="none" stroke="#e44c4c" stroke-width="2"/><path d="M3 4A5.5 5.5 0 0 1 12 5" fill="none" stroke="#3592c4" stroke-width="2"/><circle cx="12" cy="2" r="1.6" fill="#3592c4"/><circle cx="6" cy="9" r="2" fill="#3592c4"/></svg>
<svg class="a" style="left:840px;top:1011px" width="13" height="14"><circle cx="6.5" cy="7" r="6" fill="#6e6e6e"/><path d="M6.5 3L6.5 8M6.5 9.5L6.5 11" stroke="#f2f2f2" stroke-width="1.6"/></svg>
<svg class="a" style="left:927px;top:1011px" width="13" height="14"><rect x="0" y="1" width="13" height="12" fill="#6e6e6e"/><path d="M3 4L6 7L3 10M7 10L10 10" fill="none" stroke="#f2f2f2" stroke-width="1.2"/></svg>
<svg class="a" style="left:1009px;top:1011px" width="14" height="14"><path d="M7 0L13 3.5L13 10.5L7 14L1 10.5L1 3.5Z" fill="#6e6e6e"/><path d="M5 4L10 7L5 10Z" fill="#f2f2f2"/></svg>
<svg class="a" style="left:1090px;top:1011px" width="14" height="14"><path d="M4 1L10 1L10 4L12 4L12 11L9 11L9 13L5 13L5 11L2 11L2 4L4 4Z" fill="#6e6e6e"/></svg>
<div class="a" style="left:9px;top:1033px;width:10px;height:10px;border:1px solid #7a7a7a"></div>
<div class="a" style="left:6px;top:1036px;width:10px;height:10px;border:1px solid #7a7a7a;background:#f2f2f2"></div>
<div class="a ui" style="left:27px;top:1032px;">Build completed successfully in 4 sec, 506 ms (moments ago)</div>
<div class="a ui" style="left:1608px;top:1032px;">18:34</div>
<div class="a ui" style="left:1651px;top:1032px;">CRLF</div>
<div class="a ui" style="left:1691px;top:1032px;">UTF-8</div>
<div class="a ui" style="left:1737px;top:1032px;">3 spaces*</div>
<div class="a ui" style="left:1822px;top:1032px;">master</div>
<svg class="a" style="left:1806px;top:1033px" width="12" height="14"><path d="M2.5 1L2.5 12M2.5 10C2.5 6 9 7 9 2.5" fill="none" stroke="#6e6e6e" stroke-width="1.6"/><circle cx="2.5" cy="12" r="1.6" fill="#6e6e6e"/><circle cx="9" cy="2.3" r="1.6" fill="#6e6e6e"/></svg>
<svg class="a" style="left:1872px;top:1034px" width="12" height="12"><path d="M1.5 6L1.5 3.5C1.5 1 5.5 1 5.5 3.5L5.5 6" fill="none" stroke="#6e6e6e" stroke-width="1.5"/><rect x="4" y="6" width="7" height="5" fill="#6e6e6e"/></svg>
<div class="a ui" style="left:1897px;top:1028px;font-size:18px;font-weight:bold;font-style:italic;color:#e8102a;line-height:18px">y</div>
<div class="a ui" style="left:12px;top:85px;width:0;height:0"><div style="position:absolute;left:0;top:0;transform:translate(-50%,-50%) rotate(-90deg);white-space:pre;font-size:12px;line-height:16px">Project</div></div>
<div class="a" style="left:6px;top:111px;width:12px;height:9px;background:#6e6e6e;"></div>
<div class="a" style="left:6px;top:109px;width:5px;height:3px;background:#6e6e6e;"></div>
<div class="a ui" style="left:12px;top:161px;width:0;height:0"><div style="position:absolute;left:0;top:0;transform:translate(-50%,-50%) rotate(-90deg);white-space:pre;font-size:12px;line-height:16px">Commit</div></div>
<svg class="a" style="left:5px;top:186px" width="14" height="12"><circle cx="7" cy="6" r="3" fill="none" stroke="#6e6e6e" stroke-width="1.5"/><path d="M0 6L4 6M10 6L14 6" stroke="#6e6e6e" stroke-width="1.5"/></svg>
<div class="a ui" style="left:12px;top:860px;width:0;height:0"><div style="position:absolute;left:0;top:0;transform:translate(-50%,-50%) rotate(-90deg);white-space:pre;font-size:12px;line-height:16px">Bookmarks</div></div>
<svg class="a" style="left:7px;top:896px" width="10" height="12"><path d="M0 0L10 0L10 12L5 8L0 12Z" fill="#6e6e6e"/></svg>
<div class="a ui" style="left:12px;top:953px;width:0;height:0"><div style="position:absolute;left:0;top:0;transform:translate(-50%,-50%) rotate(-90deg);white-space:pre;font-size:12px;line-height:16px">Structure</div></div>
<svg class="a" style="left:7px;top:983px" width="10" height="10"><rect x="5" y="0" width="4" height="4" fill="#6e6e6e"/><rect x="0" y="5" width="4" height="4" fill="#6e6e6e"/><rect x="5" y="5" width="4" height="4" fill="#6e6e6e"/></svg>
<div class="a ui" style="left:1903px;top:65px;font-size:16px;font-weight:bold;font-style:italic;color:#6e6e6e;line-height:16px">m</div>
<div class="a ui" style="left:1909px;top:103px;width:0;height:0"><div style="position:absolute;left:0;top:0;transform:translate(-50%,-50%) rotate(90deg);white-space:pre;font-size:12px;line-height:16px">Maven</div></div>
<svg class="a" style="left:1905px;top:141px" width="12" height="13"><ellipse cx="6" cy="2" rx="5.5" ry="2" fill="#6e6e6e"/><ellipse cx="6" cy="5.5" rx="5.5" ry="2" fill="#6e6e6e"/><ellipse cx="6" cy="8.5" rx="5.5" ry="2" fill="#6e6e6e"/><ellipse cx="6" cy="11" rx="5.5" ry="2" fill="#6e6e6e"/><path d="M1 4L11 4M1 7L11 7M1 10L11 10" stroke="#f2f2f2" stroke-width="0.9"/></svg>
<div class="a ui" style="left:1909px;top:183px;width:0;height:0"><div style="position:absolute;left:0;top:0;transform:translate(-50%,-50%) rotate(90deg);white-space:pre;font-size:12px;line-height:16px">Database</div></div>
<div class="a ui" style="left:1903px;top:226px;font-size:14px;font-weight:bold;color:#6e6e6e">D</div>
<div class="a ui" style="left:1909px;top:283px;width:0;height:0"><div style="position:absolute;left:0;top:0;transform:translate(-50%,-50%) rotate(90deg);white-space:pre;font-size:12px;line-height:16px">Big Data Tools</div></div>
<svg class="a" style="left:1903px;top:345px" width="12" height="12"><rect x="0.5" y="0.5" width="9" height="9" fill="none" stroke="#6e6e6e"/><rect x="6" y="4" width="5" height="7" fill="#f2f2f2" stroke="#6e6e6e"/></svg>
<div class="a ui" style="left:1909px;top:405px;width:0;height:0"><div style="position:absolute;left:0;top:0;transform:translate(-50%,-50%) rotate(90deg);white-space:pre;font-size:12px;line-height:16px">Device Manager</div></div>
<svg class="a" style="left:1902px;top:470px" width="14" height="14"><path d="M2 11C3 9 3 7 3 5C3 2 11 2 11 5C11 7 11 9 12 11Z" fill="#6e6e6e"/><circle cx="7" cy="12.5" r="1.3" fill="#6e6e6e"/><circle cx="12" cy="2" r="2" fill="#3592c4"/></svg>
<div class="a ui" style="left:1909px;top:522px;width:0;height:0"><div style="position:absolute;left:0;top:0;transform:translate(-50%,-50%) rotate(90deg);white-space:pre;font-size:12px;line-height:16px">Notifications</div></div>
<svg class="a" style="left:1903px;top:882px" width="12" height="12"><rect x="0.5" y="2.5" width="10" height="8" fill="none" stroke="#6e6e6e"/><rect x="6" y="0.5" width="4" height="6" fill="#f2f2f2" stroke="#6e6e6e"/></svg>
<div class="a ui" style="left:1909px;top:946px;width:0;height:0"><div style="position:absolute;left:0;top:0;transform:translate(-50%,-50%) rotate(90deg);white-space:pre;font-size:12px;line-height:16px">Android Emulator</div></div>
<div class="a" style="left:1911px;top:973px;width:8px;height:50px;border:1.6px solid #5a5a5a;border-radius:4px;background:#f2f2f2"></div>
<div class="a" style="left:1914px;top:997px;width:3px;height:24px;border-radius:2px;background:linear-gradient(#8cc8ff,#3b82f0)"></div>
</body></html>
